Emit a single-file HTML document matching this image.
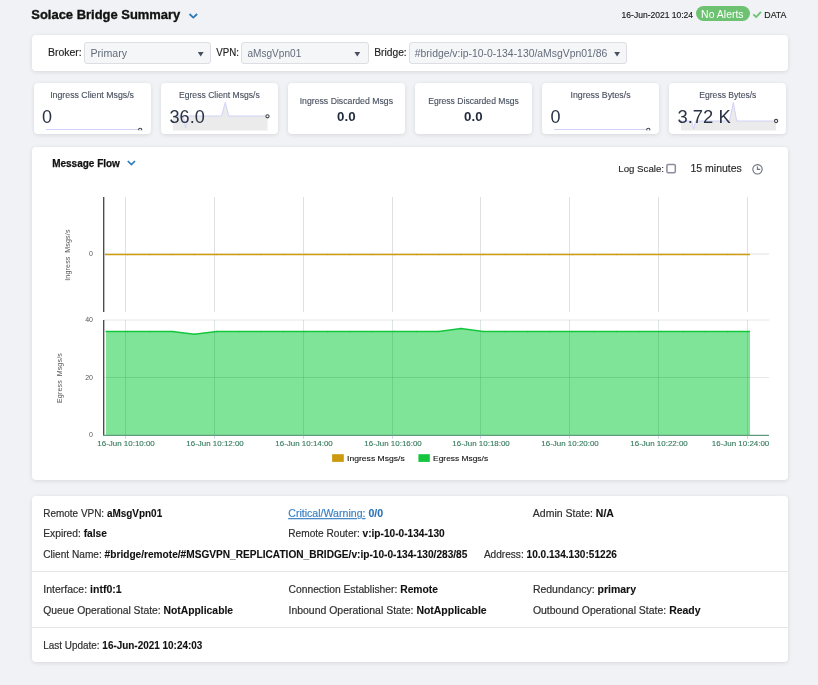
<!DOCTYPE html>
<html><head><meta charset="utf-8"><style>
html,body{margin:0;padding:0;}
body{width:818px;height:685px;overflow:hidden;background:#f0f2f5;position:relative;font-family:"Liberation Sans",sans-serif;}
.pnl{position:absolute;background:#fff;border-radius:4px;box-shadow:0 1px 4px rgba(0,0,0,0.11);}
.card{position:absolute;top:83px;width:117px;height:50.5px;background:#fff;border-radius:4px;box-shadow:0 1px 4px rgba(0,0,0,0.11);}
.sel{position:absolute;top:42px;height:19.5px;background:#f5f6f8;border:1px solid #dcdee2;border-radius:3px;}
svg{position:absolute;left:0;top:0;will-change:transform;}
</style></head><body>
<div class="pnl" style="left:32px;top:35px;width:756px;height:35.5px"></div>
<div class="card" style="left:34px"></div><div class="card" style="left:161px"></div><div class="card" style="left:288px"></div><div class="card" style="left:415px"></div><div class="card" style="left:542px"></div><div class="card" style="left:669px"></div>
<div class="pnl" style="left:32px;top:147px;width:756px;height:333px"></div>
<div class="pnl" style="left:32px;top:496px;width:756px;height:166px"></div>
<div style="position:absolute;left:32px;top:571px;width:756px;height:1px;background:#e6e6e6"></div>
<div style="position:absolute;left:32px;top:627px;width:756px;height:1px;background:#e6e6e6"></div>
<div class="sel" style="left:84px;width:125px"></div>
<div class="sel" style="left:241.2px;width:125.5px"></div>
<div class="sel" style="left:409.4px;width:216px"></div>
<div style="position:absolute;left:695.5px;top:6px;width:54px;height:15.4px;border-radius:8px;background:#6dc271"></div>
<svg width="818" height="685" viewBox="0 0 818 685" font-family="Liberation Sans, sans-serif">
<!-- header -->
<text x="31.3" y="19.0" font-size="13" font-weight="bold" fill="#111" textLength="149.0" lengthAdjust="spacingAndGlyphs" stroke="#111" stroke-width="0.35">Solace Bridge Summary</text>
<path d="M189.5,14 L193.3,17.6 L197.1,14" fill="none" stroke="#2b7bb9" stroke-width="1.8"/>
<text x="621.6" y="17.6" font-size="8.6" fill="#1a1a1a" textLength="71.5" lengthAdjust="spacingAndGlyphs" stroke="#1a1a1a" stroke-width="0.15">16-Jun-2021 10:24</text>
<text x="701.1" y="17.6" font-size="10.3" fill="#fff" textLength="42.5" lengthAdjust="spacingAndGlyphs">No Alerts</text>
<path d="M753.3,14.3 L756.2,17 L761,11.8" fill="none" stroke="#6dc271" stroke-width="1.8"/>
<text x="764.3" y="17.6" font-size="8.6" fill="#1a1a1a" textLength="22.1" lengthAdjust="spacingAndGlyphs" stroke="#1a1a1a" stroke-width="0.15">DATA</text>
<!-- filter -->
<g fill="#222" stroke="#222" stroke-width="0.15">
<text x="47.9" y="55.7" font-size="10" textLength="33.9" lengthAdjust="spacingAndGlyphs">Broker:</text>
<text x="216.2" y="55.7" font-size="10" textLength="22.7" lengthAdjust="spacingAndGlyphs">VPN:</text>
<text x="374.3" y="55.7" font-size="10" textLength="32.4" lengthAdjust="spacingAndGlyphs">Bridge:</text>
</g>
<g fill="#636c7a">
<text x="90.5" y="56.9" font-size="10" textLength="36.6" lengthAdjust="spacingAndGlyphs">Primary</text>
<text x="247.4" y="56.9" font-size="10" textLength="53.9" lengthAdjust="spacingAndGlyphs">aMsgVpn01</text>
<text x="414.8" y="56.9" font-size="10.35" textLength="192.5" lengthAdjust="spacingAndGlyphs">#bridge/v:ip-10-0-134-130/aMsgVpn01/86</text>
</g>
<g fill="#465062">
<path d="M197.8,52 L203.6,52 L200.7,56.4 Z"/>
<path d="M354.4,52 L360.2,52 L357.3,56.4 Z"/>
<path d="M614.2,52 L620,52 L617.1,56.4 Z"/>
</g>
<!-- cards -->
<g fill="#474f5d" stroke="#474f5d" stroke-width="0.12">
<text x="50.2" y="98" font-size="8.7" textLength="83.8" lengthAdjust="spacingAndGlyphs">Ingress Client Msgs/s</text>
<text x="179.0" y="98" font-size="8.7" textLength="80.7" lengthAdjust="spacingAndGlyphs">Egress Client Msgs/s</text>
<text x="299.7" y="103.7" font-size="8.7" textLength="93.3" lengthAdjust="spacingAndGlyphs">Ingress Discarded Msgs</text>
<text x="428.2" y="103.7" font-size="8.7" textLength="90.6" lengthAdjust="spacingAndGlyphs">Egress Discarded Msgs</text>
<text x="570.5" y="98" font-size="8.7" textLength="60.1" lengthAdjust="spacingAndGlyphs">Ingress Bytes/s</text>
<text x="699.3" y="98" font-size="8.7" textLength="57.1" lengthAdjust="spacingAndGlyphs">Egress Bytes/s</text>
</g>
<!-- sparklines -->
<g fill="none" stroke="#d2d2f8" stroke-width="1">
<line x1="46" y1="129.5" x2="138.5" y2="129.5"/>
<line x1="554" y1="129.5" x2="646.5" y2="129.5"/>
</g>
<path d="M173,116 L183.5,116 L185.5,128 L187.5,116 L221.5,116 L225.3,102.3 L228.7,116 L267.5,116 L267.5,130.5 L173,130.5 Z" fill="#ebebeb"/>
<path d="M173,116 L183.5,116 L185.5,128 L187.5,116 L221.5,116 L225.3,102.3 L228.7,116 L267.5,116" fill="none" stroke="#d2d2f8" stroke-width="1"/>
<path d="M681,121 L691.7,121 L693.7,129 L695.7,121 L729.5,121 L733.3,102.3 L736.7,121 L776,121 L776,130.5 L681,130.5 Z" fill="#ebebeb"/>
<path d="M681,121 L691.7,121 L693.7,129 L695.7,121 L729.5,121 L733.3,102.3 L736.7,121 L776,121" fill="none" stroke="#d2d2f8" stroke-width="1"/>
<clipPath id="spc"><rect x="0" y="95" width="818" height="35.3"/></clipPath>
<g fill="#fff" stroke="#444" stroke-width="1.1" clip-path="url(#spc)">
<circle cx="140.2" cy="129.8" r="1.6"/>
<circle cx="267.5" cy="116.3" r="1.6"/>
<circle cx="648.3" cy="129.8" r="1.6"/>
<circle cx="776.1" cy="121" r="1.6"/>
</g>
<g fill="#2a3444">
<text x="41.9" y="123.3" font-size="18">0</text>
<text x="169.5" y="123.3" font-size="18" textLength="35.3" lengthAdjust="spacingAndGlyphs">36.0</text>
<text x="550.5" y="123.3" font-size="18">0</text>
<text x="677.5" y="123.3" font-size="18" textLength="53.2" lengthAdjust="spacingAndGlyphs">3.72 K</text>
</g>
<g fill="#1f2a3a">
<text x="337.1" y="121.3" font-size="12.5" font-weight="bold" textLength="18.5" lengthAdjust="spacingAndGlyphs">0.0</text>
<text x="464.1" y="121.3" font-size="12.5" font-weight="bold" textLength="18.5" lengthAdjust="spacingAndGlyphs">0.0</text>
</g>
<!-- chart header -->
<text x="52.2" y="166.6" font-size="10" font-weight="bold" fill="#111" textLength="67.7" lengthAdjust="spacingAndGlyphs" stroke="#111" stroke-width="0.25">Message Flow</text>
<path d="M127.8,161 L131.4,164.6 L135,161" fill="none" stroke="#2b7bb9" stroke-width="1.7"/>
<text x="618.3" y="172" font-size="9.5" fill="#2a2a2a" textLength="45.7" lengthAdjust="spacingAndGlyphs" stroke="#2a2a2a" stroke-width="0.15">Log Scale:</text>
<rect x="666.9" y="164.5" width="8.4" height="8.2" rx="1.3" fill="#fff" stroke="#8a8c9e" stroke-width="1.5"/>
<text x="690.5" y="172" font-size="10.3" fill="#2a2a2a" textLength="51.3" lengthAdjust="spacingAndGlyphs" stroke="#2a2a2a" stroke-width="0.15">15 minutes</text>
<circle cx="757.5" cy="169.3" r="4.7" fill="none" stroke="#6b7280" stroke-width="1.1"/>
<path d="M757.4,166.4 L757.4,169.4 L760.2,169.4" fill="none" stroke="#6b7280" stroke-width="1.1"/>
<!-- chart -->
<g stroke="#e0e0e0" stroke-width="1">
<line x1="125.5" y1="197" x2="125.5" y2="312" /><line x1="214.5" y1="197" x2="214.5" y2="312" /><line x1="303.5" y1="197" x2="303.5" y2="312" /><line x1="392.5" y1="197" x2="392.5" y2="312" /><line x1="480.5" y1="197" x2="480.5" y2="312" /><line x1="569.5" y1="197" x2="569.5" y2="312" /><line x1="658.5" y1="197" x2="658.5" y2="312" /><line x1="747.5" y1="197" x2="747.5" y2="312" />
<line x1="104" y1="254" x2="769" y2="254"/>
</g>
<path d="M106,435 L106,331.4 L127.7,331.4 L149.9,331.4 L172.2,331.4 L194.4,334.2 L216.6,331.4 L238.8,331.4 L261.0,331.4 L283.3,331.4 L305.5,331.4 L327.7,331.4 L349.9,331.4 L372.1,331.4 L394.4,331.4 L416.6,331.4 L438.8,331.4 L461.0,328.5 L483.2,331.4 L505.5,331.4 L527.7,331.4 L549.9,331.4 L572.1,331.4 L594.3,331.4 L616.6,331.4 L638.8,331.4 L661.0,331.4 L683.2,331.4 L705.4,331.4 L727.7,331.4 L750.0,331.4 L750,435 Z" fill="#80e498"/>
<g stroke="#e6e6e6" stroke-width="1">
<line x1="104" y1="320" x2="769" y2="320"/>
</g>
<g stroke="rgba(0,90,40,0.14)" stroke-width="1">
<line x1="125.5" y1="320" x2="125.5" y2="435" /><line x1="214.5" y1="320" x2="214.5" y2="435" /><line x1="303.5" y1="320" x2="303.5" y2="435" /><line x1="392.5" y1="320" x2="392.5" y2="435" /><line x1="480.5" y1="320" x2="480.5" y2="435" /><line x1="569.5" y1="320" x2="569.5" y2="435" /><line x1="658.5" y1="320" x2="658.5" y2="435" /><line x1="747.5" y1="320" x2="747.5" y2="435" />
<line x1="104" y1="377.5" x2="750" y2="377.5"/>
</g>
<g stroke="#e6e6e6" stroke-width="1">
<line x1="750" y1="377.5" x2="769" y2="377.5"/>
</g>
<polyline points="105.5,331.4 127.7,331.4 149.9,331.4 172.2,331.4 194.4,334.2 216.6,331.4 238.8,331.4 261.0,331.4 283.3,331.4 305.5,331.4 327.7,331.4 349.9,331.4 372.1,331.4 394.4,331.4 416.6,331.4 438.8,331.4 461.0,328.5 483.2,331.4 505.5,331.4 527.7,331.4 549.9,331.4 572.1,331.4 594.3,331.4 616.6,331.4 638.8,331.4 661.0,331.4 683.2,331.4 705.4,331.4 727.7,331.4 750.0,331.4" fill="none" stroke="#14c63e" stroke-width="1.5"/>
<line x1="105" y1="254.5" x2="750" y2="254.5" stroke="#cf9a0c" stroke-width="1.35"/>
<g fill="#cf9a0c"><circle cx="127.7" cy="254.5" r="0.75"/><circle cx="149.9" cy="254.5" r="0.75"/><circle cx="172.2" cy="254.5" r="0.75"/><circle cx="194.4" cy="254.5" r="0.75"/><circle cx="216.6" cy="254.5" r="0.75"/><circle cx="238.8" cy="254.5" r="0.75"/><circle cx="261.0" cy="254.5" r="0.75"/><circle cx="283.3" cy="254.5" r="0.75"/><circle cx="305.5" cy="254.5" r="0.75"/><circle cx="327.7" cy="254.5" r="0.75"/><circle cx="349.9" cy="254.5" r="0.75"/><circle cx="372.1" cy="254.5" r="0.75"/><circle cx="394.4" cy="254.5" r="0.75"/><circle cx="416.6" cy="254.5" r="0.75"/><circle cx="438.8" cy="254.5" r="0.75"/><circle cx="461.0" cy="254.5" r="0.75"/><circle cx="483.2" cy="254.5" r="0.75"/><circle cx="505.5" cy="254.5" r="0.75"/><circle cx="527.7" cy="254.5" r="0.75"/><circle cx="549.9" cy="254.5" r="0.75"/><circle cx="572.1" cy="254.5" r="0.75"/><circle cx="594.3" cy="254.5" r="0.75"/><circle cx="616.6" cy="254.5" r="0.75"/><circle cx="638.8" cy="254.5" r="0.75"/><circle cx="661.0" cy="254.5" r="0.75"/><circle cx="683.2" cy="254.5" r="0.75"/><circle cx="705.4" cy="254.5" r="0.75"/><circle cx="727.7" cy="254.5" r="0.75"/></g>
<g fill="#14c63e"><circle cx="127.7" cy="331.4" r="0.75"/><circle cx="149.9" cy="331.4" r="0.75"/><circle cx="172.2" cy="331.4" r="0.75"/><circle cx="194.4" cy="334.2" r="0.75"/><circle cx="216.6" cy="331.4" r="0.75"/><circle cx="238.8" cy="331.4" r="0.75"/><circle cx="261.0" cy="331.4" r="0.75"/><circle cx="283.3" cy="331.4" r="0.75"/><circle cx="305.5" cy="331.4" r="0.75"/><circle cx="327.7" cy="331.4" r="0.75"/><circle cx="349.9" cy="331.4" r="0.75"/><circle cx="372.1" cy="331.4" r="0.75"/><circle cx="394.4" cy="331.4" r="0.75"/><circle cx="416.6" cy="331.4" r="0.75"/><circle cx="438.8" cy="331.4" r="0.75"/><circle cx="461.0" cy="328.5" r="0.75"/><circle cx="483.2" cy="331.4" r="0.75"/><circle cx="505.5" cy="331.4" r="0.75"/><circle cx="527.7" cy="331.4" r="0.75"/><circle cx="549.9" cy="331.4" r="0.75"/><circle cx="572.1" cy="331.4" r="0.75"/><circle cx="594.3" cy="331.4" r="0.75"/><circle cx="616.6" cy="331.4" r="0.75"/><circle cx="638.8" cy="331.4" r="0.75"/><circle cx="661.0" cy="331.4" r="0.75"/><circle cx="683.2" cy="331.4" r="0.75"/><circle cx="705.4" cy="331.4" r="0.75"/><circle cx="727.7" cy="331.4" r="0.75"/></g>
<g stroke="#444" stroke-width="1.3">
<line x1="103.7" y1="197" x2="103.7" y2="312"/>
<line x1="103.7" y1="320" x2="103.7" y2="435.5"/>
</g>
<line x1="103" y1="435.3" x2="769" y2="435.3" stroke="#5e9c7c" stroke-width="1.2"/>
<g stroke="#c8d0e8" stroke-width="1"><line x1="125.5" y1="435.8" x2="125.5" y2="438.6" /><line x1="214.5" y1="435.8" x2="214.5" y2="438.6" /><line x1="303.5" y1="435.8" x2="303.5" y2="438.6" /><line x1="392.5" y1="435.8" x2="392.5" y2="438.6" /><line x1="480.5" y1="435.8" x2="480.5" y2="438.6" /><line x1="569.5" y1="435.8" x2="569.5" y2="438.6" /><line x1="658.5" y1="435.8" x2="658.5" y2="438.6" /><line x1="747.5" y1="435.8" x2="747.5" y2="438.6" /></g>
<g fill="#34795d" stroke="#34795d" stroke-width="0.12"><text x="97.3" y="445.7" font-size="7" textLength="57.5" lengthAdjust="spacingAndGlyphs">16-Jun 10:10:00</text><text x="186.3" y="445.7" font-size="7" textLength="57.5" lengthAdjust="spacingAndGlyphs">16-Jun 10:12:00</text><text x="275.3" y="445.7" font-size="7" textLength="57.5" lengthAdjust="spacingAndGlyphs">16-Jun 10:14:00</text><text x="364.3" y="445.7" font-size="7" textLength="57.5" lengthAdjust="spacingAndGlyphs">16-Jun 10:16:00</text><text x="452.3" y="445.7" font-size="7" textLength="57.5" lengthAdjust="spacingAndGlyphs">16-Jun 10:18:00</text><text x="541.3" y="445.7" font-size="7" textLength="57.5" lengthAdjust="spacingAndGlyphs">16-Jun 10:20:00</text><text x="630.3" y="445.7" font-size="7" textLength="57.5" lengthAdjust="spacingAndGlyphs">16-Jun 10:22:00</text><text x="711.8" y="445.7" font-size="7" textLength="57.5" lengthAdjust="spacingAndGlyphs">16-Jun 10:24:00</text></g>
<g font-size="7" fill="#555" text-anchor="end">
<text x="93" y="256">0</text>
<text x="93" y="322">40</text>
<text x="93" y="380">20</text>
<text x="93" y="437">0</text>
</g>
<g font-size="7" fill="#555" letter-spacing="0.2" word-spacing="1.5">
<text transform="translate(70.2,255.1) rotate(-90)" text-anchor="middle">Ingress Msgs/s</text>
<text transform="translate(62.2,378) rotate(-90)" text-anchor="middle">Egress Msgs/s</text>
</g>
<rect x="332.1" y="454.2" width="11.7" height="7.7" fill="#cc9a10"/>
<rect x="418.4" y="454.2" width="11.4" height="7.7" fill="#14c63e"/>
<g fill="#111" stroke="#111" stroke-width="0.12">
<text x="347.1" y="460.8" font-size="8" textLength="57.6" lengthAdjust="spacingAndGlyphs">Ingress Msgs/s</text>
<text x="433.1" y="460.8" font-size="8" textLength="55.0" lengthAdjust="spacingAndGlyphs">Egress Msgs/s</text>
</g>
<!-- details -->
<g fill="#2e2e2e" stroke="#2e2e2e" stroke-width="0.18">
<text x="43.3" y="517.1" font-size="10" textLength="118.9" lengthAdjust="spacingAndGlyphs">Remote VPN: <tspan font-weight="bold" fill="#111" stroke="#111" stroke-width="0.1">aMsgVpn01</tspan></text>
<text x="288.3" y="517.1" font-size="10" textLength="94.8" lengthAdjust="spacingAndGlyphs"><tspan fill="#3b82c4" stroke="#3b82c4" text-decoration="underline">Critical/Warning:</tspan> <tspan font-weight="bold" fill="#2a70b3" stroke="#2a70b3" stroke-width="0.1">0/0</tspan></text>
<text x="532.8" y="517.1" font-size="10" textLength="81.1" lengthAdjust="spacingAndGlyphs">Admin State: <tspan font-weight="bold" fill="#111" stroke="#111" stroke-width="0.1">N/A</tspan></text>
<text x="43.3" y="537.2" font-size="10" textLength="63.7" lengthAdjust="spacingAndGlyphs">Expired: <tspan font-weight="bold" fill="#111" stroke="#111" stroke-width="0.1">false</tspan></text>
<text x="288.3" y="537.2" font-size="10" textLength="156.4" lengthAdjust="spacingAndGlyphs">Remote Router: <tspan font-weight="bold" fill="#111" stroke="#111" stroke-width="0.1">v:ip-10-0-134-130</tspan></text>
<text x="43.3" y="557.5" font-size="10" textLength="424.1" lengthAdjust="spacingAndGlyphs">Client Name: <tspan font-weight="bold" fill="#111" stroke="#111" stroke-width="0.1">#bridge/remote/#MSGVPN_REPLICATION_BRIDGE/v:ip-10-0-134-130/283/85</tspan></text>
<text x="483.9" y="557.5" font-size="10" textLength="133.0" lengthAdjust="spacingAndGlyphs">Address: <tspan font-weight="bold" fill="#111" stroke="#111" stroke-width="0.1">10.0.134.130:51226</tspan></text>
<text x="43.3" y="593.2" font-size="10" textLength="78.3" lengthAdjust="spacingAndGlyphs">Interface: <tspan font-weight="bold" fill="#111" stroke="#111" stroke-width="0.1">intf0:1</tspan></text>
<text x="288.5" y="593.2" font-size="10" textLength="149.5" lengthAdjust="spacingAndGlyphs">Connection Establisher: <tspan font-weight="bold" fill="#111" stroke="#111" stroke-width="0.1">Remote</tspan></text>
<text x="532.9" y="593.2" font-size="10" textLength="103.1" lengthAdjust="spacingAndGlyphs">Redundancy: <tspan font-weight="bold" fill="#111" stroke="#111" stroke-width="0.1">primary</tspan></text>
<text x="43.3" y="613.5" font-size="10" textLength="189.8" lengthAdjust="spacingAndGlyphs">Queue Operational State: <tspan font-weight="bold" fill="#111" stroke="#111" stroke-width="0.1">NotApplicable</tspan></text>
<text x="288.5" y="613.5" font-size="10" textLength="198.2" lengthAdjust="spacingAndGlyphs">Inbound Operational State: <tspan font-weight="bold" fill="#111" stroke="#111" stroke-width="0.1">NotApplicable</tspan></text>
<text x="532.9" y="613.5" font-size="10" textLength="167.7" lengthAdjust="spacingAndGlyphs">Outbound Operational State: <tspan font-weight="bold" fill="#111" stroke="#111" stroke-width="0.1">Ready</tspan></text>
<text x="43.3" y="648.8" font-size="10" textLength="159.0" lengthAdjust="spacingAndGlyphs">Last Update: <tspan font-weight="bold" fill="#111" stroke="#111" stroke-width="0.1">16-Jun-2021 10:24:03</tspan></text>
</g>
</svg>
</body></html>
